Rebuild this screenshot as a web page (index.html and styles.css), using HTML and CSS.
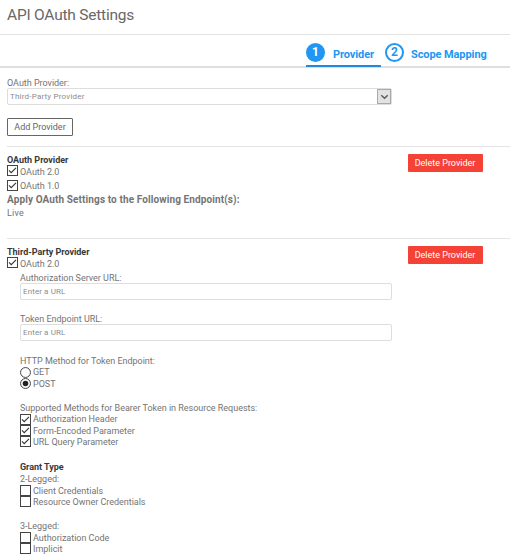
FILE: index.html
```html
<!DOCTYPE html>
<html lang="en">
<head>
<meta charset="utf-8">
<title>API OAuth Settings</title>
<link rel="stylesheet" href="styles.css">
</head>
<body>
<svg class="defs" aria-hidden="true">
  <symbol id="box" viewBox="0 0 11 11"><rect x=".5" y=".5" width="10" height="10" fill="#fff" stroke="#444"/></symbol>
  <symbol id="checked" viewBox="0 0 11 11"><rect x=".5" y=".5" width="10" height="10" fill="#fff" stroke="#444"/><path d="M2 5.4 4.2 7.6 9 2.8" fill="none" stroke="#333" stroke-width="1.1"/></symbol>
  <symbol id="radio" viewBox="0 0 11 11"><circle cx="5.5" cy="5.5" r="4.95" fill="#fff" stroke="#444"/></symbol>
  <symbol id="radio-on" viewBox="0 0 11 11"><circle cx="5.5" cy="5.5" r="4.95" fill="#fff" stroke="#444"/><circle cx="5.5" cy="5.5" r="2.8" fill="#222"/></symbol>
</svg>
<header class="header"><h1>API OAuth Settings</h1></header>
<nav class="tabs">
  <a class="tab active"><span class="num">1</span><span class="name">Provider</span></a>
  <a class="tab second"><span class="num">2</span><span class="name">Scope Mapping</span></a>
</nav>
<main>
  <section class="choose">
    <div class="label">OAuth Provider:</div>
    <div class="select"><span>Third-Party Provider</span><span class="arrow"><svg width="9" height="6" viewBox="0 0 9 6"><path d="M1.3 1.3 4.5 4.3 7.7 1.3" fill="none" stroke="#555" stroke-width="1.3"/></svg></span></div>
    <button class="add">Add Provider</button>
  </section>
  <section class="provider first">
    <div class="info">
      <h2>OAuth Provider</h2>
      <div class="option"><svg><use href="#checked"/></svg><span>OAuth 2.0</span></div>
      <div class="option spaced"><svg><use href="#checked"/></svg><span>OAuth 1.0</span></div>
      <h3>Apply OAuth Settings to the Following Endpoint(s):</h3>
      <div class="label live">Live</div>
    </div>
    <button class="delete">Delete Provider</button>
  </section>
  <section class="provider">
    <div class="info">
      <h2>Third-Party Provider</h2>
      <div class="option"><svg><use href="#checked"/></svg><span>OAuth 2.0</span></div>
      <div class="details">
        <div class="field"><div class="label">Authorization Server URL:</div><div class="input">Enter a URL</div></div>
        <div class="field"><div class="label">Token Endpoint URL:</div><div class="input">Enter a URL</div></div>
        <div class="group method">
          <div class="label">HTTP Method for Token Endpoint:</div>
          <div class="option"><svg><use href="#radio"/></svg><span>GET</span></div>
          <div class="option"><svg><use href="#radio-on"/></svg><span>POST</span></div>
        </div>
        <div class="group bearer">
          <div class="label">Supported Methods for Bearer Token in Resource Requests:</div>
          <div class="option"><svg><use href="#checked"/></svg><span>Authorization Header</span></div>
          <div class="option"><svg><use href="#checked"/></svg><span>Form-Encoded Parameter</span></div>
          <div class="option"><svg><use href="#checked"/></svg><span>URL Query Parameter</span></div>
        </div>
        <div class="group grant">
          <h2>Grant Type</h2>
          <div class="label">2-Legged:</div>
          <div class="option"><svg><use href="#box"/></svg><span>Client Credentials</span></div>
          <div class="option"><svg><use href="#box"/></svg><span>Resource Owner Credentials</span></div>
        </div>
        <div class="group">
          <div class="label">3-Legged:</div>
          <div class="option"><svg><use href="#box"/></svg><span>Authorization Code</span></div>
          <div class="option"><svg><use href="#box"/></svg><span>Implicit</span></div>
        </div>
      </div>
    </div>
    <button class="delete">Delete Provider</button>
  </section>
</main>
</body>
</html>
```

FILE: styles.css
```css
* { box-sizing: border-box; }
html, body { height: 560px; overflow: hidden; }
body { margin: 0; background: #fff; color: #747474; font: 9px/11px Roboto, sans-serif; letter-spacing: -.02px; }
.defs { display: none; }
h1, h2, h3 { margin: 0; }
.header { height: 35px; border-bottom: 1px solid #e2e2e2; padding: 5px 0 0 7px; }
h1 { font-size: 15.5px; line-height: 21px; font-weight: 400; letter-spacing: -.22px; color: #686868; }
.tabs { display: flex; height: 33px; padding-left: 306px; border-bottom: 2px solid #dfdfdf; }
.tab { display: flex; align-items: flex-start; height: 32px; padding-top: 8px; color: #2196f3; }
.active { width: 75px; border-bottom: 2px solid #1e88e5; }
.second { padding-left: 4px; }
.num { width: 19px; height: 19px; flex: none; border: 2px solid #2196f3; border-radius: 50%; font-size: 12px; line-height: 15px; font-weight: 700; text-align: center; }
.active .num { background: #2196f3; color: #fff; }
.name { margin: 4px 0 0 8px; font-size: 11px; line-height: 15px; font-weight: 700; letter-spacing: -.09px; white-space: nowrap; }
.second .name { margin-left: 7px; }
main { padding-left: 7px; }
.choose { height: 78px; padding-top: 10px; }
.choose .label { height: 10px; }
.label, .option { height: 11.25px; white-space: nowrap; }
.select { display: flex; justify-content: space-between; width: 385px; height: 17px; border: 1px solid #ddd; border-radius: 2px; padding-left: 2px; font-size: 8px; line-height: 15px; letter-spacing: .2px; color: #8c8c8c; }
.arrow { display: flex; align-items: center; justify-content: center; width: 14px; height: 15px; border: 1px solid #aaa; background: #e2e2e2; }
button { display: block; font: 9px/16px Roboto, sans-serif; padding: 0; white-space: nowrap; }
.add { width: 66px; height: 18px; margin-top: 13px; border: 1px solid #666; border-radius: 1px; background: #fff; color: #666; }
.provider { display: flex; align-items: flex-start; border-top: 1px solid #e4e4e4; padding-top: 8px; }
.first { height: 92px; }
.info { width: 400.5px; flex: none; }
h2 { height: 11px; font-size: 9px; line-height: 11px; font-weight: 700; color: #383838; }
.option { display: flex; align-items: flex-start; gap: 2px; }
.option span { padding-top: .3px; }
.option svg { width: 11px; height: 11px; flex: none; margin-top: -.6px; }
.info > .option span { padding-top: .6px; }
.spaced { margin-top: 3px; }
h3 { height: 14px; margin-top: 1.5px; font-size: 10px; line-height: 14px; font-weight: 700; letter-spacing: .11px; white-space: nowrap; }
.live { margin-top: 1px; letter-spacing: .2px; }
.delete { width: 75px; height: 18px; margin-top: -1px; border: 0; border-radius: 1px; background: #f44336; color: #fff; line-height: 18px; }
.details { padding: 3.75px 0 0 13px; }
.field { height: 41.6px; }
.field .label { height: 10px; }
.field + .field .label { margin-top: -.3px; }
.input { width: 372px; height: 17px; border: 1px solid #ddd; border-radius: 2px; padding-left: 2px; font-size: 8px; line-height: 16px; letter-spacing: .1px; color: #8c8c8c; }
.group { margin-bottom: 13.3px; }
.bearer { margin-bottom: 14px; }
.grant h2 { height: 12.2px; }
```
